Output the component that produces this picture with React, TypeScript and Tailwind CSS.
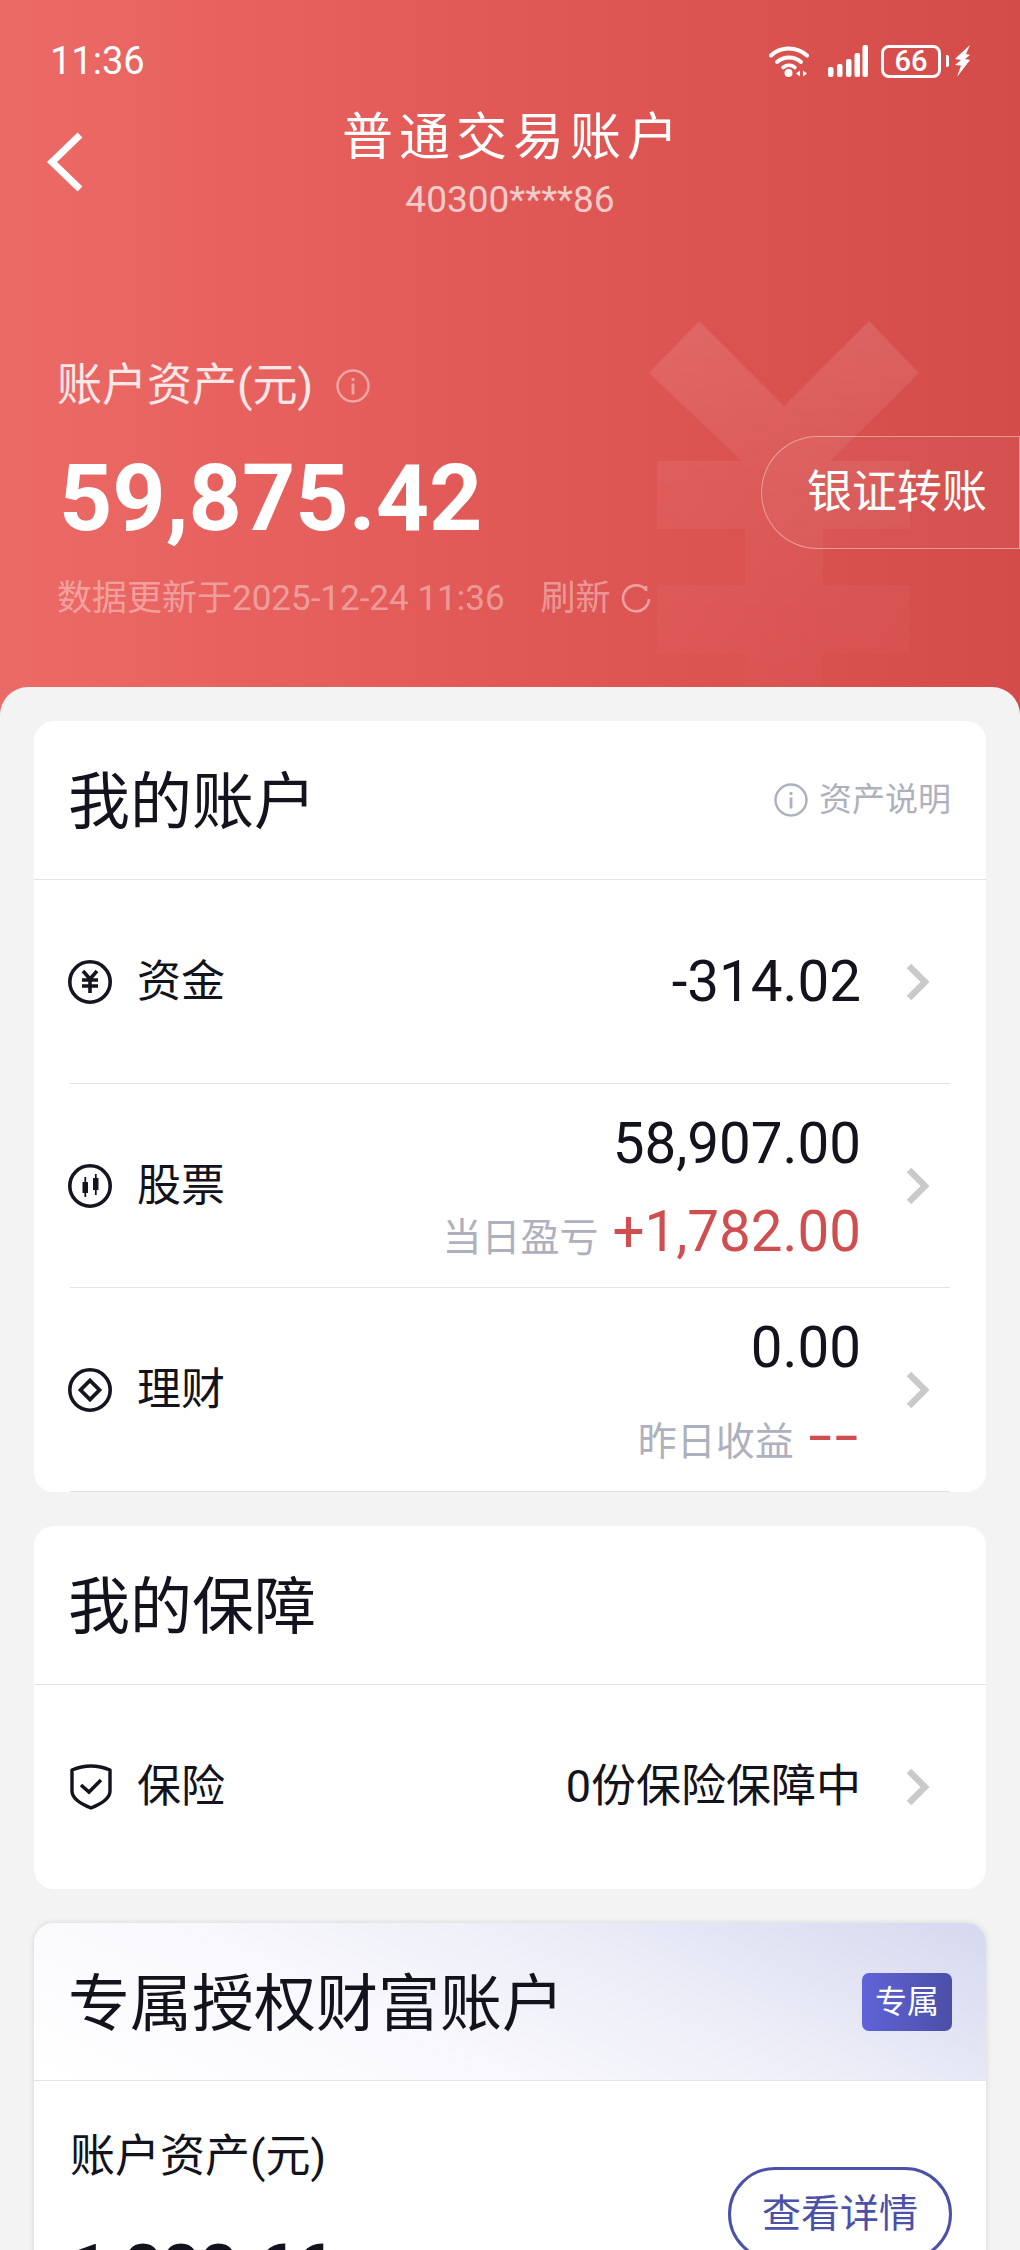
const rows = [
    {
        label: "资金",
        icon: "yuan",
        value: "-314.02",
    },
    {
        label: "股票",
        icon: "candle",
        value: "58,907.00",
        subLabel: "当日盈亏",
        subValue: "+1,782.00",
    },
    {
        label: "理财",
        icon: "coin",
        value: "0.00",
        subLabel: "昨日收益",
        subValue: "--",
    },
];

function RowIcon({ name }: { name: string }) {
    return (
        <svg width="44" height="44" viewBox="0 0 44 44" fill="none" className="-ml-[2px] shrink-0 text-[#14151f]">
            <circle cx="22" cy="22" r="20.2" stroke="currentColor" strokeWidth="3.6" />
            {name === "yuan" && (
                <path
                    d="M15 11l7 8 7-8M14 20h16M14 26h16M22 19v14"
                    stroke="currentColor"
                    strokeWidth="3.6"
                />
            )}
            {name === "candle" && (
                <g fill="currentColor">
                    <rect x="14.5" y="18" width="5.5" height="11" rx="0.5" />
                    <rect x="16.4" y="13" width="1.8" height="20" />
                    <rect x="25" y="14" width="5.5" height="12" rx="0.5" />
                    <rect x="26.9" y="10" width="1.8" height="21" />
                </g>
            )}
            {name === "coin" && (
                <path d="M22 12.5L31.500 22 22 31.500 12.500 22z" stroke="currentColor" strokeWidth="3.8" />
            )}
        </svg>
    );
}

function Chevron() {
    return (
        <svg width="24" height="38" viewBox="0 0 24 38" fill="none" className="ml-[45px] mr-[20px] shrink-0">
            <path d="M3 3l16 16L3 35" stroke="#c9cacc" strokeWidth="6.500" />
        </svg>
    );
}

function InfoIcon({ color }: { color: string }) {
    return (
        <svg width="34" height="34" viewBox="0 0 34 34" fill="none" className="shrink-0">
            <circle cx="17" cy="17" r="15.5" stroke={color} strokeWidth="2.4" />
            <rect x="15.6" y="14.5" width="2.8" height="11" fill={color} />
            <rect x="15.6" y="9" width="2.8" height="3" fill={color} />
        </svg>
    );
}

function StatusBar() {
    return (
        <div className="flex h-[38px] items-center justify-between px-[50px] text-white">
            <span className="text-[38px] leading-[38px]">11:36</span>
            <div className="flex items-center">
                {/* wifi */}
                <svg width="40" height="32" viewBox="0 0 40 32" fill="none">
                    <path d="M2 10.500C11 1 28 1 38 10.500" stroke="white" strokeWidth="4" strokeLinecap="round" />
                    <path d="M8 17c7-6 17-6 24 0" stroke="white" strokeWidth="4" strokeLinecap="round" />
                    <path d="M14 22.500c3.500-2.800 8.500-2.800 12 0" stroke="white" strokeWidth="3.600" strokeLinecap="round" />
                    <circle cx="19.500" cy="28" r="4" fill="white" />
                    <path d="M31 25.500v6l-4-3zM34 25.500v6l4-3z" fill="white" />
                </svg>
                {/* signal */}
                <svg width="40" height="32" viewBox="0 0 40 32" fill="white" className="ml-[19px]">
                    <rect x="0" y="22" width="5.500" height="10" rx="2" />
                    <rect x="9" y="19" width="5.500" height="13" rx="2" />
                    <rect x="18" y="14" width="5.500" height="18" rx="2" />
                    <rect x="26.500" y="8" width="5.500" height="24" rx="2" />
                    <rect x="34.500" y="0" width="5.500" height="32" rx="2" />
                </svg>
                {/* battery */}
                <div className="ml-[13px] flex h-[33px] w-[60px] items-center justify-center rounded-[8px] border-[3px] border-white text-[29px] font-medium leading-none">
                    66
                </div>
                <div className="ml-[5px] h-[12px] w-[3px] rounded-r-[2px] bg-white" />
                <svg width="15" height="32" viewBox="0 0 15 32" fill="white" className="ml-[6px]">
                    <path d="M15 0L3 11l-3 3 6 1-6 5 6 .500-4 11.500L15 15l-5-1 5-4-4-1z" />
                </svg>
            </div>
        </div>
    );
}

export default function App() {
    return (
        <div className="h-[2250px] w-[1020px] overflow-hidden bg-[#f3f3f3] font-['Roboto','Noto_Sans_CJK_SC',sans-serif] text-[#12131c]">
            {/* Red header */}
            <header className="relative h-[716px] bg-[linear-gradient(90deg,#ec6a66_0%,#e25a58_45%,#d34c4a_100%)] pt-[42px]">
                {/* Watermark */}
                <svg
                    width="1020"
                    height="716"
                    viewBox="0 0 1020 716"
                    className="pointer-events-none absolute left-0 top-0"
                >
                    <defs>
                        <linearGradient id="yen" gradientUnits="userSpaceOnUse" x1="0" y1="321" x2="0" y2="687">
                            <stop offset="0" stopColor="#fff" stopOpacity="0.11" />
                            <stop offset="0.45" stopColor="#fff" stopOpacity="0.05" />
                            <stop offset="1" stopColor="#fff" stopOpacity="0.01" />
                        </linearGradient>
                    </defs>
                    <path
                        d="M649 373L699 321 784 406 869 321 919 373 830 461H910V529H823V585H910V653H823V716H745V653H657V585H745V529H657V461H742z"
                        fill="url(#yen)"
                    />
                </svg>

                <div className="relative">
                    <StatusBar />

                    {/* Nav */}
                    <div className="relative mt-[28px] flex flex-col items-center text-white">
                        <svg
                            width="38"
                            height="60"
                            viewBox="0 0 38 60"
                            fill="none"
                            className="absolute left-[46px] top-[24px]"
                        >
                            <path d="M34 3L6 30l28 27" stroke="white" strokeWidth="7" />
                        </svg>
                        <h1 className="pl-[6px] text-[51px] font-normal leading-[60px] tracking-[6px]">普通交易账户</h1>
                        <p className="mt-[10px] text-[37px] leading-[44px] text-white/70">40300****86</p>
                    </div>

                    {/* Assets */}
                    <div className="mt-[139px] flex items-start justify-between pl-[57px]">
                        <div>
                            <div className="flex h-[50px] items-center gap-[23px]">
                                <span className="text-[45px] leading-[50px] text-white/85">账户资产(元)</span>
                                <InfoIcon color="rgba(255,255,255,0.45)" />
                            </div>
                            <div className="mt-[38px] pl-[2px] text-[93px] font-bold leading-[100px] text-white">
                                59,875.42
                            </div>
                            <div className="mt-[28px] flex h-[44px] items-center text-[35px] leading-[44px] text-white/40">
                                <span>数据更新于2025-12-24 11:36</span>
                                <span className="ml-[36px]">刷新</span>
                                <svg width="30" height="30" viewBox="0 0 30 30" fill="none" className="ml-[10px]">
                                    <path
                                        d="M25 6A13 13 0 1 0 28 15M25 2v5"
                                        stroke="rgba(255,255,255,0.45)"
                                        strokeWidth="2.600"
                                    />
                                </svg>
                            </div>
                        </div>
                        <button className="mt-[75px] flex h-[113px] w-[259px] items-center rounded-l-full border border-white/40 bg-white/[0.03] pl-[45px] text-[45px] text-white">
                            银证转账
                        </button>
                    </div>
                </div>
            </header>

            {/* Panel */}
            <main className="relative -mt-[29px] flex flex-col gap-[34px] rounded-t-[28px] bg-[#f3f3f3] px-[34px] pt-[34px]">
                {/* My account */}
                <section className="overflow-hidden rounded-[20px] bg-white">
                    <div className="flex h-[159px] items-center justify-between border-b border-[#e2e3e6] pl-[34px] pr-[35px]">
                        <h2 className="pt-[6px] text-[62px] font-normal leading-none">我的账户</h2>
                        <div className="flex items-center gap-[11px] text-[33px] text-[#aeb1bd]">
                            <InfoIcon color="#aeb1bd" />
                            资产说明
                        </div>
                    </div>
                    <div className="px-[36px]">
                        {rows.map((row) => (
                            <div
                                key={row.label}
                                className="flex h-[204px] items-center border-b border-[#e2e3e6]"
                            >
                                <RowIcon name={row.icon} />
                                <span className="ml-[25px] text-[44px]">{row.label}</span>
                                <div className={row.subLabel ? "flex flex-1 flex-col items-end pt-[10px]" : "flex flex-1 flex-col items-end"}>
                                    <div className="text-[56.5px] leading-[62px]">{row.value}</div>
                                    {row.subLabel && (
                                        <div className="mt-[26px] flex items-baseline gap-[14px] leading-[62px]">
                                            <span className="text-[39px] text-[#aeb1bd]">{row.subLabel}</span>
                                            {row.subValue === "--" ? (
                                                <span className="inline-block origin-right scale-x-[1.5] pl-[18px] text-[56.5px] tracking-[2px] text-[#cf4f50]">
                                                    {row.subValue}
                                                </span>
                                            ) : (
                                                <span className="text-[56.5px] text-[#cf4f50]">{row.subValue}</span>
                                            )}
                                        </div>
                                    )}
                                </div>
                                <Chevron />
                            </div>
                        ))}
                    </div>
                </section>

                {/* Protection */}
                <section className="rounded-[20px] bg-white">
                    <div className="flex h-[159px] items-center border-b border-[#e2e3e6] pl-[34px] pr-[36px]">
                        <h2 className="pt-[6px] text-[62px] font-normal leading-none">我的保障</h2>
                    </div>
                    <div className="flex h-[204px] items-center px-[36px]">
                        <svg width="42" height="46" viewBox="0 0 42 46" fill="none" className="shrink-0">
                            <path
                                d="M21 2c6 0 13 1.500 19 4v21c0 7-9 13-19 17C11 40 2 34 2 27V6c6-2.500 13-4 19-4z"
                                stroke="#12131c"
                                strokeWidth="3.400"
                                strokeLinejoin="round"
                            />
                            <path d="M11 21l8 7 12-12" stroke="#12131c" strokeWidth="3.600" />
                        </svg>
                        <span className="ml-[25px] text-[44px]">保险</span>
                        <span className="flex-1 text-right text-[45px]">0份保险保障中</span>
                        <Chevron />
                    </div>
                </section>

                {/* Wealth account */}
                <section className="rounded-[20px] bg-white shadow-[0_0_6px_rgba(0,0,0,0.12)]">
                    <div className="flex h-[158px] items-center justify-between rounded-t-[20px] border-b border-[#e2e3e6] bg-[linear-gradient(205deg,#d6d8ef_0%,#ecedf7_35%,#f9f9fd_65%,#ffffff_100%)] pl-[34px] pr-[34px]">
                        <h2 className="pt-[6px] text-[62px] font-normal leading-none">专属授权财富账户</h2>
                        <span className="flex h-[58px] w-[90px] items-center justify-center rounded-[7px] bg-[linear-gradient(90deg,#6063d8,#4b4fa6)] text-[32px] text-white">
                            专属
                        </span>
                    </div>
                    <div className="flex items-start justify-between pl-[36px] pr-[34px]">
                        <div>
                            <div className="mt-[46px] text-[45px] leading-[60px]">账户资产(元)</div>
                            <div className="mt-[43px] text-[66px] font-bold leading-[80px]">1,888.66</div>
                        </div>
                        <button className="mt-[86px] flex h-[94px] w-[224px] items-center justify-center rounded-full border-[3px] border-[#4b50a8] text-[39px] text-[#4b50a8]">
                            查看详情
                        </button>
                    </div>
                </section>
            </main>
        </div>
    );
}
